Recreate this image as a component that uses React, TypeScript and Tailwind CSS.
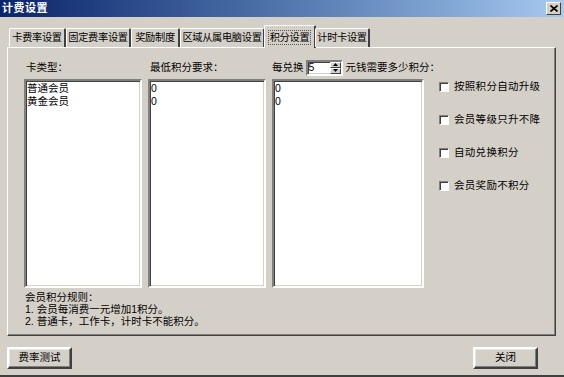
import React from "react";

const font = { fontFamily: '"Liberation Sans", "Noto Sans CJK SC", sans-serif' };

const sunken =
  "border-2 border-t-[#808080] border-l-[#808080] border-b-white border-r-white shadow-[inset_1px_1px_0_#404040,inset_-1px_-1px_0_#d4d0c8]";
const raised =
  "border-2 border-t-white border-l-white border-b-[#404040] border-r-[#404040] shadow-[inset_-1px_-1px_0_#808080,inset_1px_1px_0_#e8e6e0]";

const tabs = [
  { label: "卡费率设置", w: 57 },
  { label: "固定费率设置", w: 65 },
  { label: "奖励制度", w: 49 },
  { label: "区域从属电脑设置", w: 85 },
  { label: "积分设置", w: 50, active: true },
  { label: "计时卡设置", w: 55 },
];

function ListBox({ width, items }: { width: number; items: string[] }) {
  return (
    <div
      className={`bg-white h-[209px] shrink-0 ${sunken} pl-[1px] pt-[1px] leading-[13px]`}
      style={{ width }}
    >
      {items.map((t, i) => (
        <div key={i} className="whitespace-nowrap">{t}</div>
      ))}
    </div>
  );
}

function Check({ label }: { label: string }) {
  return (
    <div className="flex items-center h-[13px] gap-[5px] whitespace-nowrap">
      <div className="w-[10px] h-[10px] shrink-0 bg-white border border-t-[#808080] border-l-[#808080] border-b-white border-r-white shadow-[inset_1px_1px_0_#404040]" />
      <span className="tracking-[0.3px]">{label}</span>
    </div>
  );
}

export default function App() {
  return (
    <div
      className="w-[564px] h-[377px] bg-[#d4d0c8] text-black text-[10.5px] flex flex-col overflow-hidden border-b-2 border-b-[#404040]"
      style={font}
    >
      {/* Title bar */}
      <div className="h-[17px] shrink-0 flex items-center justify-between bg-gradient-to-r from-[#0a246a] to-[#a6caf0] pl-[2px] pr-[3px]">
        <span className="text-white font-bold text-[11px] leading-none tracking-[0.5px]">计费设置</span>
        <div className="w-[15px] h-[13px] bg-[#d4d0c8] flex items-center justify-center border border-t-white border-l-white border-b-[#404040] border-r-[#404040]">
          <svg width="8" height="7" viewBox="0 0 8 7">
            <path d="M0.5 0.5 L7.5 6.5 M7.5 0.5 L0.5 6.5" stroke="#000" strokeWidth="1.6" />
          </svg>
        </div>
      </div>

      <div className="px-[7px] pt-[8px]">
        {/* Tabs */}
        <div className="flex items-end pl-[2px] h-[22px] relative z-10 text-[10.2px] tracking-[-0.3px]">
          {tabs.map((t) =>
            t.active ? (
              <div
                key={t.label}
                className="h-[23px] shrink-0 -mb-[1px] bg-[#d4d0c8] border-t border-l border-r-2 border-t-white border-l-white border-r-[#404040] flex items-center justify-center rounded-t-[2px] -mx-[1px] whitespace-nowrap"
                style={{ width: t.w + 2 }}
              >
                <span className="px-[1px] outline outline-1 outline-dotted outline-[#555] leading-[13px]">{t.label}</span>
              </div>
            ) : (
              <div
                key={t.label}
                className="h-[19px] shrink-0 bg-[#d4d0c8] border-t border-l border-r-2 border-t-white border-l-white border-r-[#404040] flex items-center justify-center rounded-t-[2px] whitespace-nowrap"
                style={{ width: t.w }}
              >
                {t.label}
              </div>
            )
          )}
        </div>

        {/* Panel */}
        <div className="h-[289px] w-[549px] border border-t-white border-l-white border-b-[#404040] border-r-[#404040] shadow-[inset_-1px_-1px_0_#808080] pt-[11px] pl-[16px] flex flex-col">
          <div className="flex">
            <div className="flex flex-col w-[400px] shrink-0">
              <div className="flex gap-[6px] h-[17px] items-center whitespace-nowrap">
                <div className="w-[118px] shrink-0 pl-[2px]">卡类型：</div>
                <div className="w-[118px] shrink-0 pl-[2px]">最低积分要求：</div>
                <div className="flex items-center gap-[2px] shrink-0">
                  <span>每兑换</span>
                  <div className={`w-[37px] h-[16px] shrink-0 bg-white ${sunken} flex items-center justify-between`}>
                    <span className="pl-[1px] leading-none">5</span>
                    <div className="w-[11px] h-full flex flex-col bg-[#d4d0c8]">
                      <div className="flex-1 flex items-center justify-center border border-t-white border-l-white border-b-[#404040] border-r-[#404040]">
                        <svg width="5" height="3" viewBox="0 0 5 3"><path d="M2.5 0 L5 3 L0 3 Z" fill="#000" /></svg>
                      </div>
                      <div className="flex-1 flex items-center justify-center border border-t-white border-l-white border-b-[#404040] border-r-[#404040]">
                        <svg width="5" height="3" viewBox="0 0 5 3"><path d="M0 0 L5 0 L2.5 3 Z" fill="#000" /></svg>
                      </div>
                    </div>
                  </div>
                  <span className="ml-[1px]">元钱需要多少积分：</span>
                </div>
              </div>
              <div className="flex gap-[6px] mt-[3px]">
                <ListBox width={118} items={["普通会员", "黄金会员"]} />
                <ListBox width={118} items={["0", "0"]} />
                <ListBox width={152} items={["0", "0"]} />
              </div>
            </div>
            <div className="flex flex-col gap-[20px] pl-[15px] pt-[21px]">
              <Check label="按照积分自动升级" />
              <Check label="会员等级只升不降" />
              <Check label="自动兑换积分" />
              <Check label="会员奖励不积分" />
            </div>
          </div>
          <div className="mt-[3px] pl-[1px] leading-[12px] whitespace-nowrap">
            <div>会员积分规则：</div>
            <div>1. 会员每消费一元增加1积分。</div>
            <div>2. 普通卡，工作卡，计时卡不能积分。</div>
          </div>
        </div>

        {/* Buttons */}
        <div className="flex justify-between mt-[11px] pr-[19px]">
          <div className={`w-[65px] h-[22px] ${raised} flex items-center justify-center`}>费率测试</div>
          <div className={`w-[65px] h-[22px] ${raised} flex items-center justify-center`}>关闭</div>
        </div>
      </div>
    </div>
  );
}
